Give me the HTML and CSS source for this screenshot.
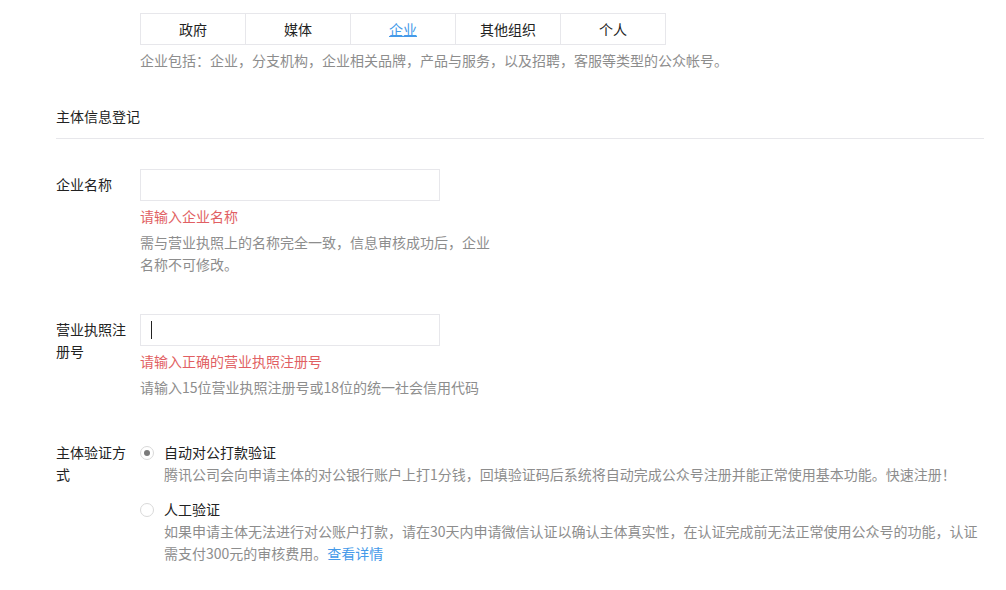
FILE: index.html
```html
<!DOCTYPE html>
<html>
<head>
    <meta charset="utf-8">
    <title>注册 - 信息登记</title>
    <link rel="stylesheet" href="styles.css">
</head>
<body>

    <div class="page">

        <div class="type-select">
            <ul class="tabs">
                <li>政府</li>
                <li>媒体</li>
                <li class="active">企业</li>
                <li>其他组织</li>
                <li>个人</li>
            </ul>
            <p class="tips">企业包括：企业，分支机构，企业相关品牌，产品与服务，以及招聘，客服等类型的公众帐号。</p>
        </div>

        <h3 class="section-title">主体信息登记</h3>

        <div class="field">
            <label class="field-label">企业名称</label>
            <div class="field-body">
                <div class="input"></div>
                <p class="error">请输入企业名称</p>
                <p class="tips narrow">需与营业执照上的名称完全一致，信息审核成功后，企业名称不可修改。</p>
            </div>
        </div>

        <div class="field">
            <label class="field-label">营业执照注册号</label>
            <div class="field-body">
                <div class="input"><span class="caret"></span></div>
                <p class="error">请输入正确的营业执照注册号</p>
                <p class="tips">请输入15位营业执照注册号或18位的统一社会信用代码</p>
            </div>
        </div>

        <div class="field">
            <label class="field-label">主体验证方式</label>
            <div class="field-body">
                <div class="radio-item">
                    <span class="radio checked"></span>
                    <div>
                        <div class="radio-title">自动对公打款验证</div>
                        <p class="tips">腾讯公司会向申请主体的对公银行账户上打1分钱，回填验证码后系统将自动完成公众号注册并能正常使用基本功能。快速注册！</p>
                    </div>
                </div>
                <div class="radio-item">
                    <span class="radio"></span>
                    <div>
                        <div class="radio-title">人工验证</div>
                        <p class="tips">如果申请主体无法进行对公账户打款，请在30天内申请微信认证以确认主体真实性，在认证完成前无法正常使用公众号的功能，认证需支付300元的审核费用。<a href="#">查看详情</a></p>
                    </div>
                </div>
            </div>
        </div>

    </div>

</body>
</html>
```

FILE: styles.css
```css
body {
    margin: 0;
    font-family: "Noto Sans CJK SC", "Microsoft YaHei", sans-serif;
    font-size: 14px;
    line-height: 22px;
    color: #222;
    background: #fff;
}
p {
    margin: 0;
}
.page {
    width: 928px;
    padding: 13px 0 0 56px;
}

/* 类型选择 */
.type-select {
    padding-left: 84px;
}
.tabs {
    display: flex;
    margin: 0;
    padding: 0;
    list-style: none;
    width: 526px;
    border: 1px solid #e7e7eb;
    box-sizing: border-box;
}
.tabs li {
    flex: 1;
    height: 30px;
    line-height: 30px;
    text-align: center;
    border-left: 1px solid #e7e7eb;
}
.tabs li:first-child {
    border-left: 0;
}
.tabs li.active {
    color: #459ae9;
    text-decoration: underline;
}
.tips {
    color: #8d8d8d;
}
.type-select .tips {
    margin-top: 4px;
}

.section-title {
    margin: 34px 0 0;
    padding-bottom: 11px;
    font-size: 14px;
    font-weight: normal;
    line-height: 22px;
    color: #222;
    border-bottom: 1px solid #e7e7eb;
}

/* 表单 */
.field {
    display: flex;
    margin-top: 30px;
}
.field + .field {
    margin-top: 39px;
}
.field + .field + .field {
    margin-top: 43px;
}
.field-label {
    width: 72px;
    margin-right: 12px;
    padding-top: 4px;
    word-break: break-all;
}
.field:last-child .field-label {
    padding-top: 0;
}
.field-body {
    flex: 1;
}
.input {
    position: relative;
    width: 300px;
    height: 32px;
    border: 1px solid #e7e7eb;
    box-sizing: border-box;
}
.caret {
    position: absolute;
    left: 10px;
    top: 6px;
    width: 1px;
    height: 18px;
    background: #222;
}
.error {
    margin-top: 4px;
    color: #e15f63;
}
.error + .tips {
    margin-top: 4px;
}
.tips.narrow {
    width: 352px;
}

.radio-item {
    display: flex;
    align-items: flex-start;
}
.radio-item + .radio-item {
    margin-top: 13px;
}
.radio {
    width: 12px;
    height: 12px;
    margin: 5px 10px 0 1px;
    flex: none;
    border: 1px solid #d9d9d9;
    border-radius: 50%;
    position: relative;
}
.radio.checked:after {
    content: "";
    position: absolute;
    left: 3px;
    top: 3px;
    width: 6px;
    height: 6px;
    border-radius: 50%;
    background: #7a7a7a;
}
.radio-title {
    color: #222;
}
.radio-item .tips {
    width: 820px;
}
a {
    color: #459ae9;
    text-decoration: none;
}
```
